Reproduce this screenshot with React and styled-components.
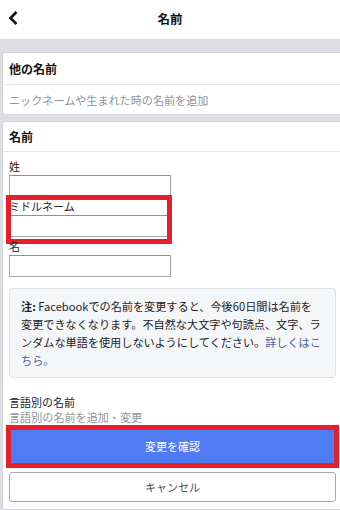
import React from "react";
import styled, { createGlobalStyle } from "styled-components";

const GlobalStyle = createGlobalStyle`
  body {
    margin: 0;
    background: #dcdee3;
    font-family: "Noto Sans CJK JP", "Noto Sans", sans-serif;
    color: #1d2129;
  }
`;

const Page = styled.div`
  width: 340px;
  height: 510px;
  overflow: hidden;
  display: flex;
  flex-direction: column;
`;

const Header = styled.header`
  display: grid;
  grid-template-columns: 40px 1fr 40px;
  align-items: center;
  height: 39px;
  background: #fff;
  svg {
    margin-left: 8px;
    margin-top: -3px;
  }
`;

const Title = styled.h1`
  margin: 0 0 3px;
  text-align: center;
  font-size: 12.5px;
  font-weight: 700;
  color: #111;
`;

const Card = styled.section`
  margin: ${(p) => p.$top}px 0 0 2px;
  background: #fff;
  border: 1px solid #d3d6db;
  border-right: none;
  border-radius: 3px 0 0 3px;
  ${(p) => p.$grow && "flex: 1;"}
`;

const CardTitle = styled.div`
  height: ${(p) => p.$h}px;
  display: flex;
  align-items: center;
  padding-left: 6px;
  font-size: 12px;
  font-weight: 700;
  border-bottom: 1px solid #e5e6e9;
  color: #111;
`;

const SubText = styled.div`
  height: 29px;
  display: flex;
  align-items: center;
  padding-left: 6px;
  font-size: 11.1px;
  color: #90949c;
`;

const Body = styled.div`
  padding: 5px 4px 0 6px;
`;

const Field = styled.div`
  position: relative;
  width: 162px;
  ${(p) =>
    p.$marked &&
    `
    &::after {
      content: "";
      position: absolute;
      top: -2px;
      left: -3px;
      right: -1px;
      bottom: -7px;
      border: 5px solid #e5202b;
    }
  `}
`;

const Label = styled.div`
  height: 18px;
  line-height: 18px;
  font-size: 11px;
  color: #1d2129;
`;

const Input = styled.div`
  height: 22px;
  box-sizing: border-box;
  border: 1px solid #a8a8a8;
  border-top-color: #8f8f8f;
  background: #fff;
`;

const Note = styled.div`
  margin-top: 11px;
  box-sizing: border-box;
  height: 90px;
  padding: 8px 6px 0 11px;
  background: #f5f6f7;
  border: 1px solid #dddfe2;
  border-radius: 4px;
  font-size: 11.15px;
  line-height: 18px;
  white-space: nowrap;
  color: #1d2129;
  b {
    font-weight: 700;
  }
  a {
    color: #4b5fa0;
    text-decoration: none;
  }
`;

const LangLabel = styled.div`
  margin-top: 17px;
  font-size: 11px;
  line-height: 15px;
  color: #1d2129;
`;

const LangLink = styled.div`
  font-size: 11.1px;
  line-height: 14px;
  color: #90949c;
`;

const Button = styled.div`
  position: relative;
  margin-top: ${(p) => p.$top}px;
  height: ${(p) => p.$h}px;
  box-sizing: border-box;
  display: flex;
  align-items: center;
  justify-content: center;
  font-size: 11px;
  border-radius: 3px;
  ${(p) =>
    p.$primary
      ? `
    background: #4f7cf2;
    color: #fff;
    &::after {
      content: "";
      position: absolute;
      top: -4px;
      left: -3px;
      right: -3px;
      bottom: -5px;
      border: 5px solid #e5202b;
    }
  `
      : `
    background: #fff;
    color: #4b4f56;
    border: 1px solid #a5a8ad;
  `}
`;

export default function App() {
  return (
    <Page>
      <GlobalStyle />
      <Header>
        <svg width="12" height="16" viewBox="0 0 12 16">
          <polyline
            points="8.5,2 2.5,8 8.5,14"
            fill="none"
            stroke="#111"
            strokeWidth="2.6"
          />
        </svg>
        <Title>名前</Title>
        <span />
      </Header>

      <Card $top={13}>
        <CardTitle $h={31}>他の名前</CardTitle>
        <SubText>ニックネームや生まれた時の名前を追加</SubText>
      </Card>

      <Card $top={6} $grow>
        <CardTitle $h={29}>名前</CardTitle>
        <Body>
          <Field>
            <Label>姓</Label>
            <Input />
          </Field>
          <Field $marked>
            <Label>ミドルネーム</Label>
            <Input />
          </Field>
          <Field>
            <Label>名</Label>
            <Input />
          </Field>

          <Note>
            <b>注:</b> Facebookでの名前を変更すると、今後60日間は名前を
            <br />
            変更できなくなります。不自然な大文字や句読点、文字、ラ
            <br />
            ンダムな単語を使用しないようにしてください。<a>詳しくはこ</a>
            <br />
            <a>ちら。</a>
          </Note>

          <LangLabel>言語別の名前</LangLabel>
          <LangLink>言語別の名前を追加・変更</LangLink>

          <Button $primary $top={5} $h={34}>
            変更を確認
          </Button>
          <Button $top={9} $h={30}>
            キャンセル
          </Button>
        </Body>
      </Card>
    </Page>
  );
}
